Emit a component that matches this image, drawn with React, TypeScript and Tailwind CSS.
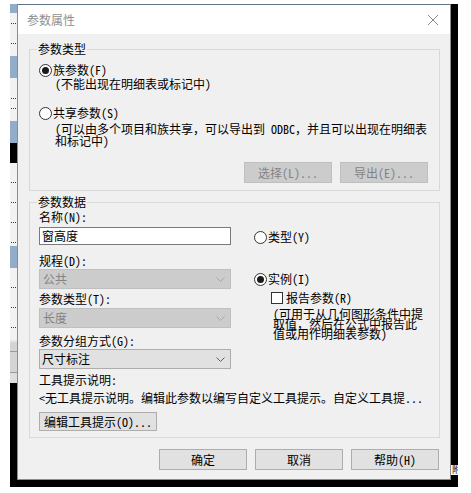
import React from "react";

const Radio = ({ checked }: { checked?: boolean }) => (
  <span className="w-[13px] h-[13px] shrink-0 rounded-full border border-[#333333] bg-white flex items-center justify-center">
    {checked ? <span className="w-[7px] h-[7px] rounded-full bg-[#1a1a1a]" /> : null}
  </span>
);

const Chevron = ({ color }: { color: string }) => (
  <svg width="9" height="5" viewBox="0 0 9 5" fill="none">
    <path d="M0.5 0.5 L4.5 4.5 L8.5 0.5" stroke={color} strokeWidth="1" />
  </svg>
);

const Dot = () => <div className="ml-[1px] w-[5px] h-0 border-t border-dotted border-[#3a3a3a]" />;

function DisabledSelect({ text, className }: { text: string; className: string }) {
  return (
    <div className={className}>
      <div className="h-[20px] w-[192px] border border-[#bfbfbf] bg-[#cccccc] flex items-center justify-between pl-[3px] pr-[5px] text-[#838383] leading-[18px]">
        <span>{text}</span>
        <Chevron color="#a8a8a8" />
      </div>
    </div>
  );
}

export default function App() {
  return (
    <div className="relative w-[471px] h-[493px] bg-white overflow-hidden flex text-[12px] text-black font-['Noto_Sans_Mono_CJK_SC','Noto_Sans_CJK_SC',sans-serif]">
      <div className="w-[10px] shrink-0 bg-white" />
      {/* background app strip */}
      <div className="w-[7px] shrink-0 flex flex-col">
        <div className="h-[4px] bg-white" />
        <div className="h-[9px] bg-[#93acc9]" />
        <div className="h-[43px] bg-[#f2f2f2] flex flex-col pt-[10px]">
          <Dot />
          <div className="h-[19px]" />
          <Dot />
        </div>
        <div className="h-[22px] bg-[#93acc9]" />
        <div className="h-[43px] bg-[#f2f2f2] flex flex-col pt-[20px]">
          <Dot />
          <div className="h-[9px]" />
          <Dot />
        </div>
        <div className="h-[22px] bg-[#93acc9]" />
        <div className="h-[20px] bg-black" />
        <div className="h-[83px] bg-[#f2f2f2] flex flex-col pt-[19px] gap-[19px]">
          <Dot />
          <Dot />
          <Dot />
          <Dot />
        </div>
        <div className="h-[22px] bg-[#93acc9]" />
        <div className="h-[72px] bg-[#f2f2f2] flex flex-col pt-[19px] gap-[19px]">
          <Dot />
          <Dot />
          <Dot />
        </div>
        <div className="h-[2px] bg-[#e6e6e6]" />
        <div className="h-[30px] bg-[#d4d4d4] flex flex-col pt-[9px]">
          <div className="h-px bg-[#9a9a9a]" />
        </div>
        <div className="h-[11px] bg-[#dedede] border-t border-[#9a9a9a]" />
        <div className="h-[104px] bg-black" />
        <div className="flex-1 bg-white" />
      </div>

      <div className="w-[441px] shrink-0 flex flex-col">
        <div className="h-[4px] bg-white" />
        <div className="flex h-[476px]">
          {/* dialog */}
          <div className="w-[434px] h-[476px] shrink-0 border border-[#8c8c8c] border-t-[#5f7287] flex flex-col bg-[#f0f0f0]">
            <div className="h-[29px] shrink-0 bg-white flex items-center justify-between pl-[9px] pr-[12px]">
              <span className="text-[#8f8f8f] leading-[16px]">参数属性</span>
              <svg width="10" height="10" viewBox="0 0 10 10" fill="none">
                <path d="M0 0 L10 10 M10 0 L0 10" stroke="#8a8a8a" strokeWidth="1" />
              </svg>
            </div>
            <div className="flex-1 pt-[15px] pl-[11px] pr-[10px] flex flex-col">
              {/* group 1 */}
              <div className="border border-[#d9d9d9] pb-[7px] flex flex-col">
                <div className="-mt-[9px] ml-[7px] px-[1px] h-[16px] leading-[16px] bg-[#f0f0f0] self-start">参数类型</div>
                <div className="mt-[5px] ml-[9px] h-[16px] flex items-center">
                  <Radio checked />
                  <span className="ml-[1px] leading-[16px]">族参数(F)</span>
                </div>
                <div className="ml-[25px] h-[12px] leading-[12px] whitespace-nowrap">(不能出现在明细表或标记中)</div>
                <div className="mt-[15px] ml-[9px] h-[16px] flex items-center">
                  <Radio />
                  <span className="ml-[1px] leading-[16px]">共享参数(S)</span>
                </div>
                <div className="mt-[2px] ml-[25px] h-[24px] leading-[12px] whitespace-nowrap">
                  (可以由多个项目和族共享，可以导出到 ODBC，并且可以出现在明细表
                  <br />
                  和标记中)
                </div>
                <div className="mt-[15px] flex justify-end gap-[8px] pr-[11px]">
                  <div className="w-[88px] h-[21px] border border-[#bfbfbf] bg-[#cccccc] text-[#838383] flex items-center justify-center">选择(L)...</div>
                  <div className="w-[88px] h-[21px] border border-[#bfbfbf] bg-[#cccccc] text-[#838383] flex items-center justify-center">导出(E)...</div>
                </div>
              </div>

              {/* group 2 */}
              <div className="mt-[11px] border border-[#d9d9d9] pb-[6px] flex flex-col">
                <div className="-mt-[9px] ml-[7px] px-[1px] h-[16px] leading-[16px] bg-[#f0f0f0] self-start">参数数据</div>
                <div className="flex pl-[9px]">
                  <div className="w-[192px] shrink-0 flex flex-col">
                    <div className="h-[14px] leading-[14px]">名称(N):</div>
                    <div className="mt-[3px] h-[18px] border border-[#7a7a7a] bg-white pl-[2px] leading-[16px]">窗高度</div>
                    <div className="mt-[9px] h-[14px] leading-[14px]">规程(D):</div>
                    <DisabledSelect text="公共" className="mt-[1px]" />
                    <div className="mt-[3px] h-[14px] leading-[14px]">参数类型(T):</div>
                    <DisabledSelect text="长度" className="mt-[2px]" />
                    <div className="mt-[6px] h-[14px] leading-[14px]">参数分组方式(G):</div>
                    <div className="mt-[1px] h-[20px] w-[192px] border border-[#adadad] bg-[#e1e1e1] flex items-center justify-between pl-[2px] pr-[5px] leading-[18px]">
                      <span>尺寸标注</span>
                      <Chevron color="#606060" />
                    </div>
                  </div>
                  <div className="ml-[23px] flex flex-col">
                    <div className="mt-[20px] h-[14px] flex items-center">
                      <Radio />
                      <span className="ml-[1px] leading-[14px]">类型(Y)</span>
                    </div>
                    <div className="mt-[28px] h-[14px] flex items-center">
                      <Radio checked />
                      <span className="ml-[1px] leading-[14px]">实例(I)</span>
                    </div>
                    <div className="mt-[5px] ml-[17px] h-[14px] flex items-center">
                      <span className="w-[12px] h-[12px] shrink-0 border border-[#333333] bg-white" />
                      <span className="ml-[3px] leading-[14px]">报告参数(R)</span>
                    </div>
                    <div className="mt-[4px] ml-[19px] leading-[10px] whitespace-nowrap">
                      (可用于从几何图形条件中提
                      <br />
                      取值，然后在公式中报告此
                      <br />
                      值或用作明细表参数)
                    </div>
                  </div>
                </div>
                <div className="pl-[9px] flex flex-col">
                  <div className="mt-[4px] h-[14px] leading-[14px]">工具提示说明:</div>
                  <div className="mt-[4px] h-[14px] leading-[14px] whitespace-nowrap">&lt;无工具提示说明。编辑此参数以编写自定义工具提示。自定义工具提...</div>
                  <div className="mt-[7px] w-[118px] h-[19px] border border-[#adadad] bg-[#e1e1e1] flex items-center justify-center leading-[17px]">编辑工具提示(O)...</div>
                </div>
              </div>

              {/* bottom buttons */}
              <div className="mt-[11px] flex justify-end gap-[8px] mr-[1px]">
                <div className="w-[88px] h-[21px] border border-[#adadad] bg-[#e1e1e1] flex items-center justify-center">确定</div>
                <div className="w-[88px] h-[21px] border border-[#adadad] bg-[#e1e1e1] flex items-center justify-center">取消</div>
                <div className="w-[88px] h-[21px] border border-[#adadad] bg-[#e1e1e1] flex items-center justify-center">帮助(H)</div>
              </div>
            </div>
          </div>
          {/* black backdrop to right */}
          <div className="w-[7px] shrink-0 flex flex-col">
            <div className="h-[461px] bg-black" />
            <div className="h-[10px] bg-white overflow-hidden text-[9px] leading-[10px] pl-[1px] text-black">附</div>
            <div className="flex-1 bg-black" />
          </div>
        </div>
        <div className="h-[7px] bg-black" />
        <div className="flex-1 bg-white" />
      </div>
      <div className="flex-1 bg-white" />
    </div>
  );
}
